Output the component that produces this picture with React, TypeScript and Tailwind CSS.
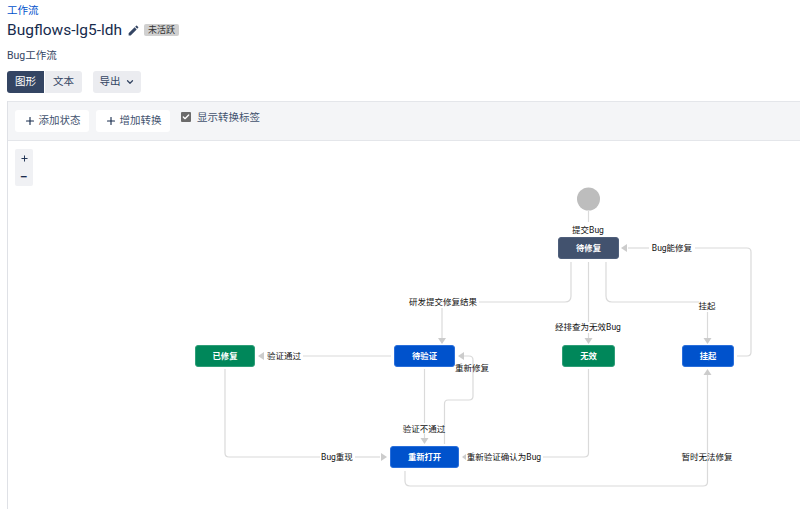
import React from 'react';
import { ChevronDown, Check, Plus } from 'lucide-react';
import { MdEdit } from 'react-icons/md';

const CANVAS_X = 8;
const CANVAS_Y = 141;

interface FlowNode {
  label: string;
  x: number;
  y: number;
  w: number;
  color: string;
}

interface FlowLabel {
  text: string;
  cx: number;
  cy: number;
}

const nodes: FlowNode[] = [
  { label: '待修复', x: 558, y: 237, w: 61, color: 'bg-[#42526e] border-[#4f5f7b]' },
  { label: '待验证', x: 394, y: 345, w: 61, color: 'bg-[#0052cc] border-[#2a6fdb]' },
  { label: '无效', x: 562, y: 345, w: 53, color: 'bg-[#00875a] border-[#2f9e78]' },
  { label: '挂起', x: 682, y: 345, w: 52, color: 'bg-[#0052cc] border-[#2a6fdb]' },
  { label: '已修复', x: 195, y: 345, w: 60, color: 'bg-[#00875a] border-[#2f9e78]' },
  { label: '重新打开', x: 390, y: 446, w: 69, color: 'bg-[#0052cc] border-[#2a6fdb]' },
];

const labels: FlowLabel[] = [
  { text: '提交Bug', cx: 588, cy: 230 },
  { text: 'Bug能修复', cx: 672, cy: 248 },
  { text: '研发提交修复结果', cx: 443, cy: 302 },
  { text: '挂起', cx: 707, cy: 306 },
  { text: '经排查为无效Bug', cx: 588, cy: 327 },
  { text: '验证通过', cx: 284, cy: 356 },
  { text: '重新修复', cx: 472, cy: 368 },
  { text: '验证不通过', cx: 424, cy: 429 },
  { text: 'Bug重现', cx: 337, cy: 457 },
  { text: '重新验证确认为Bug', cx: 504, cy: 457 },
  { text: '暂时无法修复', cx: 707, cy: 457 },
];

const edges = [
  'M588.5 211V222',
  'M571 262V296Q571 302 565 302H479',
  'M442 308V338',
  'M588.5 262V322',
  'M588.5 333V338',
  'M606 262V296Q606 302 612 302H699',
  'M707.5 312V338',
  'M737 356H747Q751 356 751 352V252Q751 248 747 248H695',
  'M649 248H628',
  'M391 356H303',
  'M225 369V453Q225 457 229 457H320',
  'M355 457H380',
  'M424.5 369V423',
  'M424.5 434V438',
  'M444.5 444V404Q444.5 400 448 400H469Q473 400 473 396V360Q473 356 469 356H464',
  'M588.5 369V453Q588.5 457 584 457H543',
  'M405 471V481Q405 486 410 486H703Q707.5 486 707.5 482V375',
];

const arrows = [
  '442,344 438,338 446,338',
  '588.5,344 584.5,338 592.5,338',
  '707.5,344 703.5,338 711.5,338',
  '621,248 627,244 627,252',
  '258,356 264,352 264,360',
  '387,457 381,453 381,461',
  '424.5,444 420.5,438 428.5,438',
  '458,356 464,352 464,360',
  '462,457 466,454 466,460',
  '707.5,369 703.5,375 711.5,375',
];

const App: React.FC = () => {
  return (
    <div className="h-[509px] w-[800px] overflow-hidden bg-white text-[#172b4d] font-['Noto_Sans','Noto_Sans_CJK_SC',sans-serif] flex flex-col">
      <div className="pl-[7px] pt-[3px]">
        <a className="block text-[10.5px] leading-[15px] text-[#0052cc]">工作流</a>
        <div className="flex h-[24px] items-center">
          <h1 className="font-['Roboto','Noto_Sans_CJK_SC',sans-serif] text-[15.5px] leading-[24px] font-normal text-[#172b4d]">Bugflows-lg5-ldh</h1>
          <MdEdit className="ml-[5px] text-[13px] text-[#344563]" />
          <span className="ml-[4px] flex h-[12px] w-[35px] items-center justify-center rounded-[2px] bg-[#d0d0d0] text-[9px] text-[#333]">未活跃</span>
        </div>
        <p className="mt-[6px] font-['Roboto','Noto_Sans_CJK_SC',sans-serif] text-[10.5px] leading-[16px] text-[#344563]">Bug工作流</p>
        <div className="mt-[7px] flex h-[22px] text-[10.5px]">
          <button className="flex w-[37px] items-center justify-center rounded-l-[3px] bg-[#344563] text-white">图形</button>
          <button className="ml-px flex w-[37px] items-center justify-center rounded-r-[3px] bg-[#ebecf0] text-[#344563]">文本</button>
          <button className="ml-[11px] flex w-[48px] items-center justify-center gap-[4px] rounded-[3px] bg-[#ebecf0] text-[#344563]">
            导出
            <ChevronDown size={10} strokeWidth={3} />
          </button>
        </div>
      </div>

      <div className="mt-[8px] ml-[7px] flex flex-1 flex-col border-l border-[#dfe1e6]">
        <div className="flex h-[40px] border-y border-[#e4e6ea] bg-[#f4f5f7] pl-[7px] text-[10.5px]">
          <div className="mt-[8px] flex h-[22px] gap-[7px]">
            <button className="flex w-[74px] items-center justify-center gap-[3px] rounded-[3px] bg-white text-[#42526e]">
              <Plus size={12} strokeWidth={2.25} className="text-[#172b4d]" />
              添加状态
            </button>
            <button className="flex w-[74px] items-center justify-center gap-[3px] rounded-[3px] bg-white text-[#42526e]">
              <Plus size={12} strokeWidth={2.25} className="text-[#172b4d]" />
              增加转换
            </button>
          </div>
          <label className="ml-[11px] mt-[9px] flex h-[11px] items-center gap-[6px] text-[#42526e]">
            <span className="flex h-[10px] w-[10px] items-center justify-center rounded-[1px] bg-[#6b6b6b]">
              <Check size={8} strokeWidth={4} className="text-white" />
            </span>
            <span className="mt-[3px]">显示转换标签</span>
          </label>
        </div>

        <div className="relative flex-1">
          <div className="absolute left-[7px] top-[8px] z-10 flex w-[18px] flex-col rounded-[2px] bg-[#f0f1f4] text-[#172b4d]">
            <button className="flex h-[18px] items-center justify-center"><Plus size={9} strokeWidth={2.5} /></button>
            <button className="flex h-[19px] items-center justify-center text-[12px] font-bold leading-none">−</button>
          </div>

          <svg className="absolute inset-0 h-full w-full" viewBox={`${CANVAS_X} ${CANVAS_Y} 792 368`}>
            <circle cx="588.5" cy="199" r="11.5" fill="#bdbdbd" />
            {edges.map((d, i) => (
              <path key={i} d={d} fill="none" stroke="#dadada" strokeWidth="1.2" />
            ))}
            {arrows.map((p, i) => (
              <polygon key={i} points={p} fill="#cccccc" />
            ))}
          </svg>

          {nodes.map((n) => (
            <div
              key={n.label}
              className={`absolute flex h-[22px] items-center justify-center rounded-[3px] border text-[8.3px] font-bold text-white ${n.color}`}
              style={{ left: n.x - CANVAS_X, top: n.y - CANVAS_Y, width: n.w }}
            >
              {n.label}
            </div>
          ))}

          {labels.map((l) => (
            <span
              key={l.text}
              className="absolute -translate-x-1/2 -translate-y-1/2 whitespace-nowrap font-['Roboto','Noto_Sans_CJK_SC',sans-serif] text-[8.5px] leading-[12px] text-[#111]"
              style={{ left: l.cx - CANVAS_X, top: l.cy - CANVAS_Y }}
            >
              {l.text}
            </span>
          ))}
        </div>
      </div>
    </div>
  );
};

export default App;
